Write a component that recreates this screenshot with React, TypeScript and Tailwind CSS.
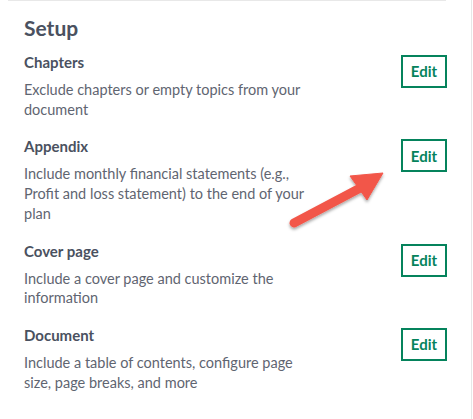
import React from "react";

const items = [
  { title: "Chapters", text: "Exclude chapters or empty topics from your document" },
  {
    title: "Appendix",
    text: "Include monthly financial statements (e.g., Profit and loss statement) to the end of your plan",
  },
  { title: "Cover page", text: "Include a cover page and customize the information" },
  { title: "Document", text: "Include a table of contents, configure page size, page breaks, and more" },
];

const Arrow = () => (
  <svg
    className="absolute left-[280px] top-[160px]"
    width="120"
    height="80"
    viewBox="0 0 120 80"
  >
    <defs>
      <filter id="sh" x="-20%" y="-20%" width="140%" height="160%">
        <feDropShadow dx="0" dy="2" stdDeviation="1.6" floodColor="#000" floodOpacity="0.35" />
      </filter>
    </defs>
    <g filter="url(#sh)" fill="#f2574a" stroke="#f2574a">
      <line x1="14" y1="63" x2="84" y2="26" strokeWidth="9" strokeLinecap="round" />
      <polygon points="103,13 70,16 87,40" strokeWidth="1" strokeLinejoin="round" />
    </g>
  </svg>
);

export default function App() {
  return (
    <div
      className="relative w-[472px] min-h-[419px] border-r border-[#e7e7e7] bg-white"
      style={{ fontFamily: "Lato, 'Noto Sans', sans-serif" }}
    >
      <div className="ml-2 h-px w-[438px] bg-[#e8e8e8]" />
      <div className="px-6 pt-[11px]">
        <h2 className="text-[21px] font-bold leading-8 text-[#4a5160]">Setup</h2>
        <div className="mt-[8px] flex flex-col gap-[17px]">
          {items.map((it) => (
            <div key={it.title} className="flex items-start justify-between">
              <div className="w-[290px]">
                <div className="text-[15px] font-bold leading-5 text-[#4a5160]">{it.title}</div>
                <p className="mt-2 text-[14.5px] leading-[19.7px] text-[#5f6571]">{it.text}</p>
              </div>
              <button
                type="button"
                className="mt-[3px] h-[33px] w-[46px] border-2 border-[#05835c] text-[15px] font-bold text-[#05835c]"
              >
                Edit
              </button>
            </div>
          ))}
        </div>
      </div>
      <Arrow />
    </div>
  );
}
